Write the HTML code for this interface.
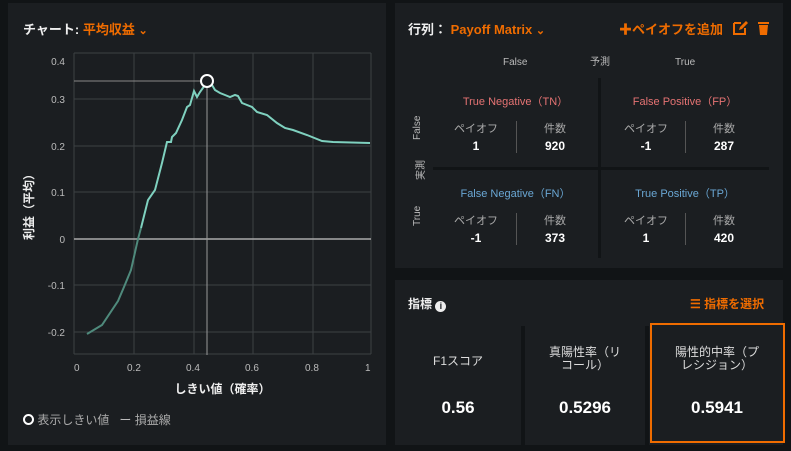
<!DOCTYPE html>
<html><head><meta charset="utf-8"><style>
*{margin:0;padding:0;box-sizing:border-box}
body{width:791px;height:451px;background:#111416;font-family:"Liberation Sans","Noto Sans CJK JP",sans-serif;position:relative;overflow:hidden;color:#ddd}
.p{position:absolute;background:#1b1e21}
.a{position:absolute;white-space:nowrap}
.o{color:#ef6c00;font-weight:bold}
.c{text-align:center}
</style></head><body>
<div class="p" style="left:8px;top:3px;width:378px;height:442px"></div>
<div class="p" style="left:395px;top:3px;width:388px;height:265px"></div>
<div class="p" style="left:395px;top:280px;width:388px;height:165px"></div>

<div class="a" style="left:23px;top:19px;font-size:13px;font-weight:bold;color:#eee">チャート: <span class="o">平均収益</span> <span class="o" style="font-size:11px">&#x2304;</span></div>

<svg class="a" style="left:0;top:0" width="395" height="451">
<g stroke="#3d4144" stroke-width="1">
<line x1="74" y1="53" x2="371" y2="53"/><line x1="74" y1="99" x2="371" y2="99"/><line x1="74" y1="146" x2="371" y2="146"/><line x1="74" y1="192" x2="371" y2="192"/><line x1="74" y1="285" x2="371" y2="285"/><line x1="74" y1="332" x2="371" y2="332"/><line x1="74" y1="354" x2="371" y2="354"/>
<line x1="74" y1="53" x2="74" y2="354"/><line x1="134" y1="53" x2="134" y2="354"/><line x1="194" y1="53" x2="194" y2="354"/><line x1="253" y1="53" x2="253" y2="354"/><line x1="313" y1="53" x2="313" y2="354"/><line x1="371" y1="53" x2="371" y2="354"/>
</g>
<line x1="74" y1="239" x2="371" y2="239" stroke="#aaa" stroke-width="1.5"/>
<line x1="74" y1="81" x2="201" y2="81" stroke="#888" stroke-width="1"/>
<line x1="207" y1="87" x2="207" y2="355" stroke="#999" stroke-width="1"/>
<polyline fill="none" stroke="#4f8a7c" stroke-width="2" points="87,334 102,325 118,301 124,287 131,270 138,239 141,228"/>
<polyline fill="none" stroke="#7fd1bf" stroke-width="2" points="141,228 148,200 155,190 162,163 167,142 171,142 172,137 176,133 182,120 187,107 190,105 194,91 197,97 200,92 205,85 212,85 215,90 220,93 225,95 230,97 235,95 238,96 242,103 252,107 257,112 267,115 277,123 285,128 293,130 307,135 322,141 333,142 370,143"/>
<circle cx="207" cy="81" r="6" fill="#1b1e21" stroke="#fff" stroke-width="2"/>
<g fill="#bbb" font-size="10" font-family="Liberation Sans" text-anchor="end">
<text x="65" y="65">0.4</text><text x="65" y="103">0.3</text><text x="65" y="150">0.2</text><text x="65" y="196">0.1</text><text x="65" y="243">0</text><text x="65" y="289">-0.1</text><text x="65" y="336">-0.2</text>
</g>
<g fill="#bbb" font-size="10" font-family="Liberation Sans">
<text x="74" y="371">0</text><text x="127" y="371">0.2</text><text x="186" y="371">0.4</text><text x="245" y="371">0.6</text><text x="305" y="371">0.8</text><text x="365" y="371">1</text>
</g>
<text x="33" y="204" transform="rotate(-90 33 204)" text-anchor="middle" fill="#eee" font-size="12" font-weight="bold" font-family="Liberation Sans,Noto Sans CJK JP">利益（平均）</text>
</svg>
<div class="a" style="left:0;top:380px;width:445px;text-align:center;font-size:12px;font-weight:bold;color:#eee">しきい値（確率）</div>
<div class="a" style="left:23px;top:411px;font-size:12px;color:#aaa"><span style="display:inline-block;width:11px;height:11px;border:2px solid #fff;border-radius:50%;vertical-align:-1px"></span> 表示しきい値 &nbsp;&nbsp;<span style="color:#bbb">ー</span> 損益線</div>

<div class="a" style="left:408px;top:19px;font-size:13px;font-weight:bold;color:#eee">行列： <span class="o">Payoff Matrix</span> <span class="o" style="font-size:11px">&#x2304;</span></div>
<div class="a o" style="left:619px;top:19px;font-size:13px">✚ペイオフを追加</div>
<svg class="a" style="left:733px;top:20px" width="40" height="16"><path d="M1 3h7M1 3v11h11v-6" fill="none" stroke="#ef6c00" stroke-width="2"/><path d="M6 10l1-3 6-6 2 2-6 6z" fill="#ef6c00"/><rect x="25" y="2" width="11" height="2" fill="#ef6c00"/><path d="M26 5h9l-1 10h-7z" fill="#ef6c00"/></svg>

<div class="a" style="left:503px;top:57px;font-size:10px;color:#bbb">False</div>
<div class="a" style="left:590px;top:56px;font-size:10px;color:#bbb;line-height:13px">予測</div>
<div class="a" style="left:675px;top:57px;font-size:10px;color:#bbb">True</div>
<div class="a" style="left:598px;top:78px;width:3px;height:180px;background:#111416"></div>
<div class="a" style="left:433px;top:167px;width:336px;height:3px;background:#111416"></div>
<div class="a" style="left:412px;top:140px;font-size:10px;color:#bbb;transform:rotate(-90deg);transform-origin:left top">False</div>
<div class="a" style="left:412px;top:180px;font-size:10px;color:#bbb;transform:rotate(-90deg);transform-origin:left top">実測</div>
<div class="a" style="left:412px;top:226px;font-size:10px;color:#bbb;transform:rotate(-90deg);transform-origin:left top">True</div>

<div class="a c" style="left:433px;top:93px;width:165px;font-size:11px;color:#e57373">True Negative（TN）</div>
<div class="a c" style="left:601px;top:93px;width:168px;font-size:11px;color:#e57373">False Positive（FP）</div>
<div class="a c" style="left:433px;top:185px;width:165px;font-size:11px;color:#6aa7d4">False Negative（FN）</div>
<div class="a c" style="left:601px;top:185px;width:168px;font-size:11px;color:#6aa7d4">True Positive（TP）</div>

<div class="a" style="left:516px;top:121px;width:1px;height:32px;background:#555"></div>
<div class="a" style="left:685px;top:121px;width:1px;height:32px;background:#555"></div>
<div class="a" style="left:516px;top:213px;width:1px;height:32px;background:#555"></div>
<div class="a" style="left:685px;top:213px;width:1px;height:32px;background:#555"></div>

<div class="a c" style="left:450px;top:120px;width:52px;font-size:11px;color:#aaa">ペイオフ<br><b style="color:#fff;line-height:20px;font-size:12px">1</b></div>
<div class="a c" style="left:530px;top:120px;width:50px;font-size:11px;color:#aaa">件数<br><b style="color:#fff;line-height:20px;font-size:12px">920</b></div>
<div class="a c" style="left:620px;top:120px;width:52px;font-size:11px;color:#aaa">ペイオフ<br><b style="color:#fff;line-height:20px;font-size:12px">-1</b></div>
<div class="a c" style="left:699px;top:120px;width:50px;font-size:11px;color:#aaa">件数<br><b style="color:#fff;line-height:20px;font-size:12px">287</b></div>
<div class="a c" style="left:450px;top:212px;width:52px;font-size:11px;color:#aaa">ペイオフ<br><b style="color:#fff;line-height:20px;font-size:12px">-1</b></div>
<div class="a c" style="left:530px;top:212px;width:50px;font-size:11px;color:#aaa">件数<br><b style="color:#fff;line-height:20px;font-size:12px">373</b></div>
<div class="a c" style="left:620px;top:212px;width:52px;font-size:11px;color:#aaa">ペイオフ<br><b style="color:#fff;line-height:20px;font-size:12px">1</b></div>
<div class="a c" style="left:699px;top:212px;width:50px;font-size:11px;color:#aaa">件数<br><b style="color:#fff;line-height:20px;font-size:12px">420</b></div>

<div class="a" style="left:408px;top:295px;font-size:12px;font-weight:bold;color:#eee">指標 <span style="display:inline-block;width:11px;height:11px;border-radius:50%;background:#eee;color:#1b1e21;font-size:9px;text-align:center;line-height:11px;vertical-align:-1px">i</span></div>
<div class="a o" style="left:690px;top:295px;font-size:12px">☰ 指標を選択</div>
<div class="a" style="left:521px;top:326px;width:4px;height:119px;background:#111416"></div>
<div class="a" style="left:645px;top:326px;width:4px;height:119px;background:#111416"></div>
<div class="a c" style="left:395px;top:352px;width:126px;font-size:12px;color:#ddd">F1スコア</div>
<div class="a c" style="left:525px;top:346px;width:120px;font-size:12px;color:#ddd;white-space:normal;line-height:13px;padding:0 22px">真陽性率（リコール）</div>
<div class="a c" style="left:651px;top:346px;width:132px;font-size:12px;color:#ddd;white-space:normal;line-height:13px;padding:0 22px">陽性的中率（プレシジョン）</div>
<div class="a c" style="left:395px;top:398px;width:126px;font-size:17px;font-weight:bold;color:#fff">0.56</div>
<div class="a c" style="left:525px;top:398px;width:120px;font-size:17px;font-weight:bold;color:#fff">0.5296</div>
<div class="a c" style="left:651px;top:398px;width:132px;font-size:17px;font-weight:bold;color:#fff">0.5941</div>
<div class="a" style="left:650px;top:323px;width:135px;height:120px;border:2px solid #ef6c00"></div>
</body></html>
